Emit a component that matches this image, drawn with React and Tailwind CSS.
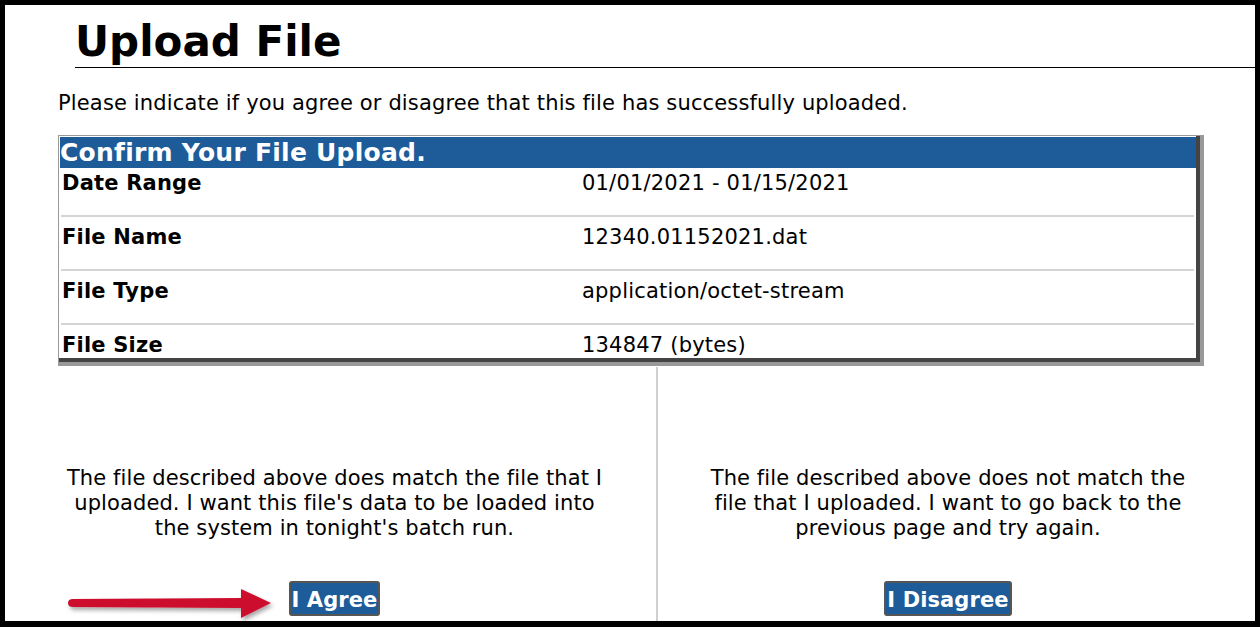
const font = { fontFamily: '"DejaVu Sans", Verdana, sans-serif' };

const rows = [
  { label: "Date Range", value: "01/01/2021 - 01/15/2021", cls: "h-[47px] pt-[3px]", line: true },
  { label: "File Name", value: "12340.01152021.dat", cls: "h-[52px] pt-[8px]", line: true },
  { label: "File Type", value: "application/octet-stream", cls: "h-[52px] pt-[8px]", line: true },
  { label: "File Size", value: "134847 (bytes)", cls: "h-[33px] pt-[8px]", line: false },
];

function Button({ children }) {
  return (
    <button className="h-[35px] rounded-[3px] border-2 border-[#555] bg-[#1d5b99] px-px pt-[4px] text-[21px] font-bold leading-[27px] text-white">
      {children}
    </button>
  );
}

export default function App() {
  return (
    <div
      className="relative h-[627px] w-[1260px] overflow-hidden border-x-[5px] border-t-[5px] border-b-[6px] border-black bg-white text-black"
      style={font}
    >
      <div className="ml-[70px] mt-[15px] border-b border-black pb-[3px]">
        <h1 className="text-[42px] font-bold leading-[44px]">Upload File</h1>
      </div>

      <p className="ml-[53px] mt-[23px] text-[21px] leading-[25px] tracking-[0.15px]">
        Please indicate if you agree or disagree that this file has successfully uploaded.
      </p>

      {/* confirm box */}
      <div className="ml-[53px] mt-[19px] w-[1146px] border-l border-t border-b-4 border-r-4 border-[#999]">
        <div className="border-b-4 border-r-4 border-[#444] pl-px pt-px">
          <div className="h-[31px] bg-[#1d5b99] text-[25px] font-bold leading-[31px] tracking-[0.25px] text-white">
            Confirm Your File Upload.
          </div>
          {rows.map((r) => (
            <div key={r.label}>
              <div className={`grid grid-cols-[522px_1fr] text-[21px] leading-[25px] tracking-[0.2px] ${r.cls}`}>
                <div className="pl-[2px] font-bold">{r.label}</div>
                <div>{r.value}</div>
              </div>
              {r.line && <div className="ml-px mr-[2px] h-[2px] bg-[#d4d4d4]" />}
            </div>
          ))}
        </div>
      </div>

      {/* agree / disagree */}
      <div className="flex h-[255px]">
        <div className="flex w-[651px] flex-col items-center pl-[8px] pt-[100px] text-center text-[21px] leading-[25px] tracking-[0.1px]">
          <p>
            The file described above does match the file that I<br />
            uploaded. I want this file's data to be loaded into<br />
            the system in tonight's batch run.
          </p>
          <div className="mt-[40px]">
            <Button>I Agree</Button>
          </div>
        </div>
        <div className="mt-px w-[2px] bg-[#d0d0d0]" />
        <div className="flex flex-1 flex-col items-center pr-[17px] pt-[100px] text-center text-[21px] leading-[25px] tracking-[0.1px]">
          <p>
            The file described above does not match the<br />
            file that I uploaded. I want to go back to the<br />
            previous page and try again.
          </p>
          <div className="mt-[40px]">
            <Button>I Disagree</Button>
          </div>
        </div>
      </div>

      {/* annotation arrow */}
      <svg
        className="pointer-events-none absolute left-[54px] top-[574px]"
        width="230"
        height="48"
        viewBox="0 0 230 48"
      >
        <defs>
          <filter id="sh" x="-10%" y="-30%" width="120%" height="160%">
            <feDropShadow dx="2" dy="3" stdDeviation="2" floodColor="#000" floodOpacity="0.35" />
          </filter>
        </defs>
        <g filter="url(#sh)">
          <path d="M14 20 L182 19 L182 10 L212 24 L182 39 L182 29 L14 28 Q9 28 9 24 Q9 20 14 20 Z" fill="#cc0f2e" />
        </g>
      </svg>
    </div>
  );
}
